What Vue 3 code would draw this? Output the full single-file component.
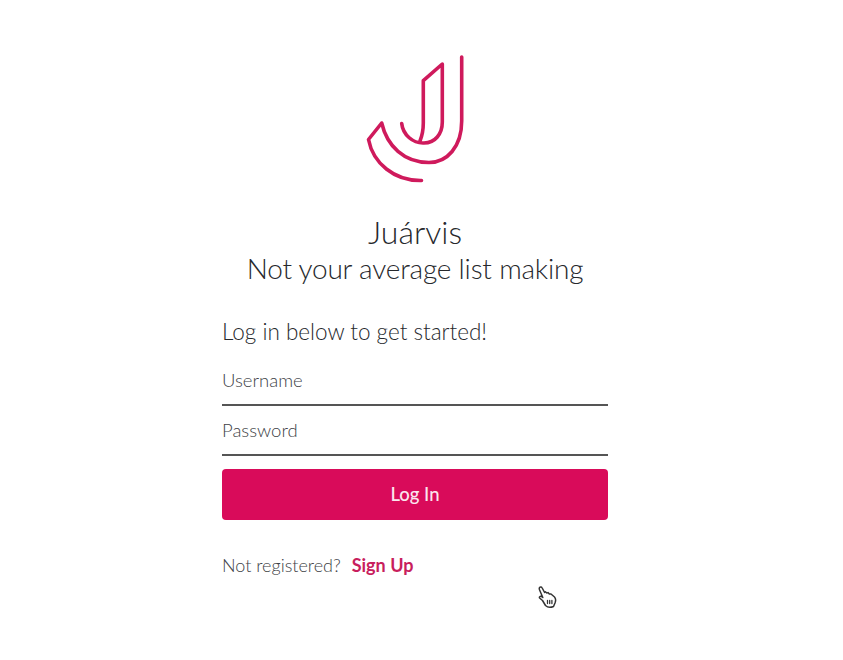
<script setup>
const brand = 'Juárvis'
const tagline = 'Not your average list making'
</script>

<template>
  <main class="page">
    <svg class="logo" width="110" height="140" viewBox="360 50 110 140" fill="none" stroke="#cf1a5c" stroke-width="3.6" stroke-linecap="round" stroke-linejoin="round">
      <path d="M461.7 57V121C461.7 147 447 162.5 429 162.5C404 162.5 387 146 381.7 123L368.5 139.5C373 163 394 181 421.5 180.5" />
      <path d="M401.7 123.5C403 135 413 143.5 424 143C435 143 442.3 134 442.3 122V64L423.3 80.7V123C423.3 130 422 136 420 141" />
    </svg>
    <h1 class="title">
      <span class="brand">{{ brand }}</span>
      <span class="tagline">{{ tagline }}</span>
    </h1>
    <form class="form" @submit.prevent>
      <p class="lead">Log in below to get started!</p>
      <label class="field">Username</label>
      <label class="field">Password</label>
      <button class="submit" type="button">Log In</button>
      <p class="signup">Not registered? <a class="link">Sign Up</a></p>
    </form>
    <svg class="cursor" width="20" height="24" viewBox="0 0 20 24" fill="#fff" stroke="#333" stroke-width="1.5" stroke-linejoin="round" stroke-linecap="round">
      <path d="M2.5 2.5C3.5 1.5 4.7 2 5.2 3L7.6 7.5L8.4 6.8L9.8 8L11 7.6L12.3 9L14 9L17.5 12C18.8 13.5 18.8 16 18 18L16.5 21.5C13.5 22.7 10 22 8.5 20.5L5.5 15.5L2.6 13C2 12 3 11 4.4 11.5L5.8 12.5L2.6 5C2.2 4 2.1 3.2 2.5 2.5Z" />
      <path d="M10.5 15.5V18.5M12.7 15.5V18.5M14.9 15.5V18.5" stroke-width="1.3" />
    </svg>
  </main>
</template>

<style scoped>
.page {
  position: relative;
  width: 843px;
  height: 660px;
  display: flex;
  flex-direction: column;
  align-items: center;
  background: #fff;
  font-family: "Lato", "Noto Sans", sans-serif;
  color: #26282c;
  overflow: hidden;
  box-sizing: border-box;
  padding: 50px 13px 0 0;
}
.logo { display: block; flex: none; }
.title {
  margin: 23px 0 0;
  font-weight: 300;
  text-align: center;
  white-space: nowrap;
}
.brand, .tagline { display: block; }
.brand { font-size: 32px; line-height: 37px; }
.tagline { font-size: 28px; line-height: 37px; letter-spacing: -0.2px; }
.form {
  width: 386px;
  margin: 28px 0 0;
  display: flex;
  flex-direction: column;
}
.lead {
  margin: 0 0 7px;
  font-size: 22.5px;
  line-height: 34px;
  font-weight: 300;
  white-space: nowrap;
}
.field {
  height: 50px;
  box-sizing: border-box;
  padding-top: 12px;
  font-size: 18.5px;
  line-height: 24px;
  font-weight: 300;
  color: #404246;
  border-bottom: 2px solid #555;
}
.submit {
  margin-top: 13px;
  height: 51px;
  border: none;
  border-radius: 4px;
  background: #d90b5a;
  color: #fbe6ee;
  font: 500 18.5px/51px "Lato", sans-serif;
  padding: 0;
}
.signup {
  margin: 32px 0 0;
  font-size: 18px;
  line-height: 26px;
  font-weight: 300;
  color: #404246;
  white-space: nowrap;
}
.link {
  margin-left: 6px;
  font-weight: 700;
  color: #c81e5d;
}
.cursor {
  position: absolute;
  left: 537px;
  top: 585px;
}
</style>
